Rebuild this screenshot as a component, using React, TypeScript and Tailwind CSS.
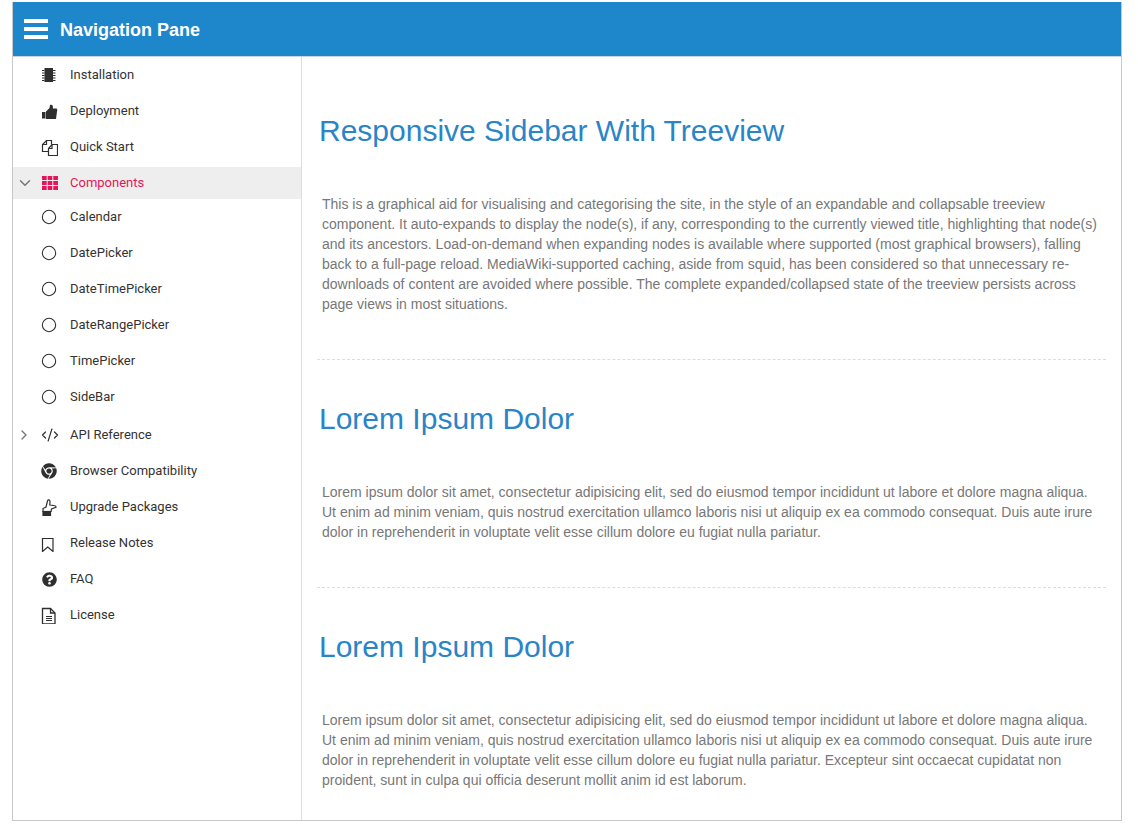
import React from "react";
import { Circle, ChevronDown, ChevronRight, CodeXml } from "lucide-react";
import { FaChrome, FaQuestionCircle } from "react-icons/fa";

const ChipIcon = () => (
  <svg width="18" height="18" viewBox="0 0 18 18" fill="currentColor">
    <rect x="4.5" y="2" width="8.5" height="14" />
    <path d="M2 4h2.5v1H2zM2 6.5h2.5v1H2zM2 9h2.5v1H2zM2 11.5h2.5v1H2zM2 14h2.5v1H2z" />
    <path d="M13 4h2.5v1H13zM13 6.5h2.5v1H13zM13 9h2.5v1H13zM13 11.5h2.5v1H13zM13 14h2.5v1H13z" />
  </svg>
);

const ThumbIcon = () => (
  <svg width="18" height="18" viewBox="0 0 18 18" fill="currentColor">
    <rect x="2" y="10" width="3.5" height="6.5" />
    <path d="M6 9.5L9.5 6 10 3C12 2 13.5 3.5 12.8 6.5H16.2C17.4 6.5 17.6 8.5 17 9.5L16 17H6Z" />
  </svg>
);

const CopyIcon = () => (
  <svg width="18" height="18" viewBox="0 0 18 18" fill="none" stroke="currentColor" strokeWidth="1.2">
    <path d="M8 13.5H2.5V6.5L6.5 2.5H11.5V6.5" />
    <path d="M6.5 2.5V6.5H2.5" />
    <path d="M12 6.5H17.5V17.5H8.5V10.5Z" />
    <path d="M12 6.5V10.5H8.5" />
  </svg>
);

const GridIcon = () => (
  <svg width="18" height="18" viewBox="0 0 18 18" fill="currentColor">
    <path d="M2 2H6.7V6H2zM7.7 2H12.3V6H7.7zM13.3 2H18V6H13.3z" />
    <path d="M2 7H6.7V11H2zM7.7 7H12.3V11H7.7zM13.3 7H18V11H13.3z" />
    <path d="M2 12H6.7V16H2zM7.7 12H12.3V16H7.7zM13.3 12H18V16H13.3z" />
  </svg>
);

const HandIcon = () => (
  <svg width="18" height="18" viewBox="0 0 18 18" fill="none" stroke="currentColor" strokeWidth="1.2">
    <rect x="3" y="13.5" width="7.5" height="4" fill="currentColor" />
    <path d="M3 14V10.5L6 9 7.5 3C8 1.5 10 1.5 10 3.5L9.8 7 14 7.5C15.2 7.6 16.2 8.4 16 9.4L11.5 11 11 14" />
  </svg>
);

const BookmarkIcon = () => (
  <svg width="18" height="18" viewBox="0 0 18 18" fill="none" stroke="currentColor" strokeWidth="1.2">
    <path d="M2.5 4.5H13V17.5L7.75 13 2.5 17.5Z" />
  </svg>
);

const FileIcon = () => (
  <svg width="18" height="18" viewBox="0 0 18 18" fill="none" stroke="currentColor" strokeWidth="1.3">
    <path d="M2.5 2.5H10.5L15 7V18H2.5Z" />
    <path d="M10.5 2.5V7H15" />
    <path d="M6 10.5H12M6 12.5H12M6 14.5H12" strokeWidth="1" />
  </svg>
);

const Row = ({
  icon,
  label,
  arrow,
  active,
}: {
  icon: React.ReactNode;
  label: string;
  arrow?: React.ReactNode;
  active?: boolean;
}) => (
  <div
    className={`flex items-center ${active ? "h-8 mt-[2px] bg-[#eeeeee] text-[#e3165b]" : "h-9 text-[#333333]"}`}
  >
    <span className="w-[24px] pl-[3px] flex text-[#777777]">{arrow}</span>
    <span className={`w-[24px] flex justify-center ${active ? "text-[#e3165b]" : "text-[#2f2f2f]"}`}>{icon}</span>
    <span className="ml-[9px] text-[13px]">{label}</span>
  </div>
);

const topItems = [
  { label: "Installation", icon: <ChipIcon /> },
  { label: "Deployment", icon: <ThumbIcon /> },
  { label: "Quick Start", icon: <CopyIcon /> },
];

const children = ["Calendar", "DatePicker", "DateTimePicker", "DateRangePicker", "TimePicker", "SideBar"];

const bottomItems = [
  { label: "Browser Compatibility", icon: <FaChrome size={16} /> },
  { label: "Upgrade Packages", icon: <HandIcon /> },
  { label: "Release Notes", icon: <BookmarkIcon /> },
  { label: "FAQ", icon: <FaQuestionCircle size={15} /> },
  { label: "License", icon: <FileIcon /> },
];

const Section = ({ title, text, last }: { title: string; text: string; last?: boolean }) => (
  <section className={last ? "" : "border-b border-dashed border-[#dddddd] pb-[45px]"}>
    <h2 className="mt-[42px] pl-[2px] text-[30px] leading-[33px] text-[#2a84c8]">{title}</h2>
    <p className="mt-[47px] pl-[5px] pr-[6px] text-[14px] leading-5 text-[#777777]">{text}</p>
  </section>
);

export default function App() {
  return (
    <div className="h-[833px] pt-[2px] pl-[12px] pr-[16px] pb-[12px] bg-white font-['Liberation_Sans',Arial,sans-serif]">
      <div className="h-[819px] border-l border-r border-b border-[#c8c8c8] flex flex-col">
        <header className="h-[55px] shrink-0 bg-[#1e86ca] border-b border-[#c8d4e0] flex items-center pl-[11px] text-white">
          <div className="flex flex-col gap-[4px]">
            <span className="block w-6 h-[4px] bg-white"></span>
            <span className="block w-6 h-[4px] bg-white"></span>
            <span className="block w-6 h-[4px] bg-white"></span>
          </div>
          <span className="ml-3 mt-[2px] text-[18px] font-bold">Navigation Pane</span>
        </header>
        <div className="flex flex-1 min-h-0">
          <aside className="w-[289px] shrink-0 border-r border-[#dddddd] font-['Roboto',sans-serif]">
            {topItems.map((item) => (
              <Row key={item.label} icon={item.icon} label={item.label} />
            ))}
            <Row active icon={<GridIcon />} label="Components" arrow={<ChevronDown size={18} strokeWidth={2} />} />
            {children.map((c) => (
              <Row key={c} icon={<Circle size={16} strokeWidth={1.6} />} label={c} />
            ))}
            <div className="h-[2px]"></div>
            <Row
              icon={<CodeXml size={18} strokeWidth={1.6} className="ml-[1px]" />}
              label="API Reference"
              arrow={<ChevronRight size={16} strokeWidth={2} />}
            />
            {bottomItems.map((item) => (
              <Row key={item.label} icon={item.icon} label={item.label} />
            ))}
          </aside>
          <main className="flex-1 pl-[15px] pr-[15px] pt-[15px] overflow-hidden">
            <Section
              title="Responsive Sidebar With Treeview"
              text="This is a graphical aid for visualising and categorising the site, in the style of an expandable and collapsable treeview component. It auto-expands to display the node(s), if any, corresponding to the currently viewed title, highlighting that node(s) and its ancestors. Load-on-demand when expanding nodes is available where supported (most graphical browsers), falling back to a full-page reload. MediaWiki-supported caching, aside from squid, has been considered so that unnecessary re-downloads of content are avoided where possible. The complete expanded/collapsed state of the treeview persists across page views in most situations."
            />
            <Section
              title="Lorem Ipsum Dolor"
              text="Lorem ipsum dolor sit amet, consectetur adipisicing elit, sed do eiusmod tempor incididunt ut labore et dolore magna aliqua. Ut enim ad minim veniam, quis nostrud exercitation ullamco laboris nisi ut aliquip ex ea commodo consequat. Duis aute irure dolor in reprehenderit in voluptate velit esse cillum dolore eu fugiat nulla pariatur."
            />
            <Section
              last
              title="Lorem Ipsum Dolor"
              text="Lorem ipsum dolor sit amet, consectetur adipisicing elit, sed do eiusmod tempor incididunt ut labore et dolore magna aliqua. Ut enim ad minim veniam, quis nostrud exercitation ullamco laboris nisi ut aliquip ex ea commodo consequat. Duis aute irure dolor in reprehenderit in voluptate velit esse cillum dolore eu fugiat nulla pariatur. Excepteur sint occaecat cupidatat non proident, sunt in culpa qui officia deserunt mollit anim id est laborum."
            />
          </main>
        </div>
      </div>
    </div>
  );
}
